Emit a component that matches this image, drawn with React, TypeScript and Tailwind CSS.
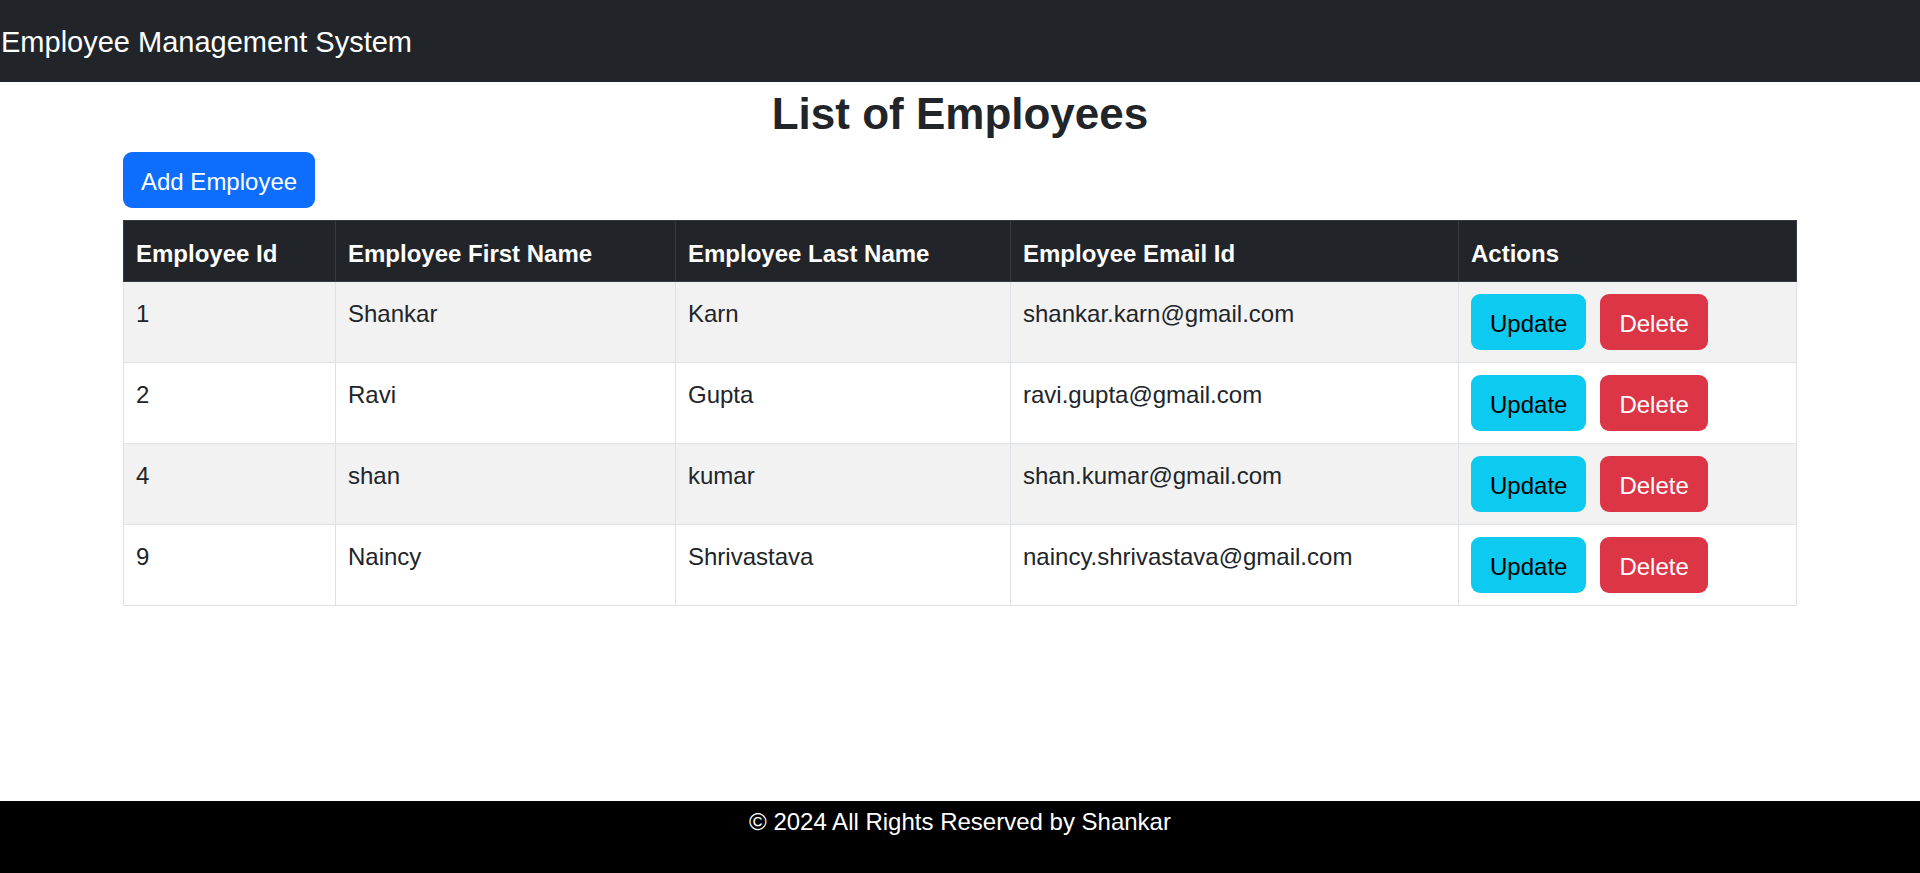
const employees = [
  { id: 1, first: "Shankar", last: "Karn", email: "shankar.karn@gmail.com" },
  { id: 2, first: "Ravi", last: "Gupta", email: "ravi.gupta@gmail.com" },
  { id: 4, first: "shan", last: "kumar", email: "shan.kumar@gmail.com" },
  { id: 9, first: "Naincy", last: "Shrivastava", email: "naincy.shrivastava@gmail.com" },
];

export default function App() {
  return (
    <div className="min-h-screen flex flex-col bg-white text-[#212529] font-['Liberation_Sans',Arial,sans-serif]">
      {/* Header */}
      <header className="h-[82px] bg-[#212529] flex items-center">
        <span className="text-white text-[29px] leading-[36px] pl-[1px] pt-[2px]">Employee Management System</span>
      </header>

      {/* Main */}
      <main className="w-[1674px] mx-auto">
        <h2 className="text-center text-[44px] font-bold leading-[57px] pt-[3px] mb-[10px]">List of Employees</h2>
        <div className="mb-[12px]">
          <button className="h-[56px] px-[18px] pt-[3px] rounded-[9px] bg-[#0d6efd] text-white text-[24px] leading-[36px]">
            Add Employee
          </button>
        </div>

        <table className="w-full table-fixed border-collapse text-[24px] leading-[36px]">
          <colgroup>
            <col className="w-[212px]" />
            <col className="w-[340px]" />
            <col className="w-[335px]" />
            <col className="w-[448px]" />
            <col />
          </colgroup>
          <thead>
            <tr className="bg-[#212529] text-white">
              <th className="text-left font-bold px-[12px] pt-[15px] pb-[9px] border border-[#373b3e] align-top">Employee Id</th>
              <th className="text-left font-bold px-[12px] pt-[15px] pb-[9px] border border-[#373b3e] align-top">Employee First Name</th>
              <th className="text-left font-bold px-[12px] pt-[15px] pb-[9px] border border-[#373b3e] align-top">Employee Last Name</th>
              <th className="text-left font-bold px-[12px] pt-[15px] pb-[9px] border border-[#373b3e] align-top">Employee Email Id</th>
              <th className="text-left font-bold px-[12px] pt-[15px] pb-[9px] border border-[#373b3e] align-top">Actions</th>
            </tr>
          </thead>
          <tbody>
            {employees.map((e, i) => (
              <tr key={e.id} className={i % 2 === 0 ? "bg-[#f2f2f2]" : "bg-white"}>
                <td className="px-[12px] pt-[14px] pb-[10px] border border-[#dee2e6] align-top">{e.id}</td>
                <td className="px-[12px] pt-[14px] pb-[10px] border border-[#dee2e6] align-top">{e.first}</td>
                <td className="px-[12px] pt-[14px] pb-[10px] border border-[#dee2e6] align-top">{e.last}</td>
                <td className="px-[12px] pt-[14px] pb-[10px] border border-[#dee2e6] align-top">{e.email}</td>
                <td className="p-[12px] border border-[#dee2e6] align-top">
                  <div className="flex gap-[14px]">
                    <button className="h-[56px] px-[19px] pt-[3px] rounded-[9px] bg-[#0dcaf0] text-black">Update</button>
                    <button className="h-[56px] px-[19px] pt-[3px] rounded-[9px] bg-[#dc3545] text-white">Delete</button>
                  </div>
                </td>
              </tr>
            ))}
          </tbody>
        </table>
      </main>

      {/* Footer */}
      <footer className="mt-auto h-[72px] pt-[3px] bg-black text-white text-center text-[24px] leading-[36px]">
        © 2024 All Rights Reserved by Shankar
      </footer>
    </div>
  );
}
